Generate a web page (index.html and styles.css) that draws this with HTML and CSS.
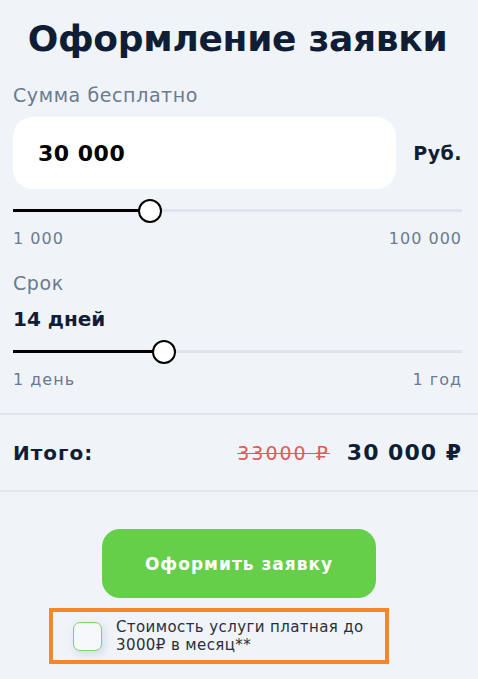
FILE: index.html
```html
<!DOCTYPE html>
<html lang="ru">
<head>
  <meta charset="UTF-8">
  <title>Оформление заявки</title>
  <meta name="viewport" content="width=device-width, initial-scale=1.0">
  <link rel="stylesheet" href="styles.css">
</head>
<body>

<div class="container">
  <h1>Оформление заявки</h1>

  <!-- Сумма -->
  <div class="field">
    <div class="label">Сумма бесплатно</div>
    <div class="amount-row">
      <div class="amount-box">30 000</div>
      <div class="currency">Руб.</div>
    </div>
    <div class="slider">
      <div class="slider-fill" style="width: 137px"></div>
      <span class="slider-thumb" style="left: 137px"></span>
    </div>
    <div class="range-labels">
      <span>1 000</span>
      <span>100 000</span>
    </div>
  </div>

  <!-- Срок -->
  <div class="field term">
    <div class="label">Срок</div>
    <div class="term-value">14 дней</div>
    <div class="slider">
      <div class="slider-fill" style="width: 151px"></div>
      <span class="slider-thumb" style="left: 151px"></span>
    </div>
    <div class="range-labels">
      <span>1 день</span>
      <span>1 год</span>
    </div>
  </div>
</div>

<div class="total">
  <div class="total-label">Итого:</div>
  <div class="total-prices">
    <span class="old-price">33000 ₽</span>
    <span class="new-price">30 000 ₽</span>
  </div>
</div>

<div class="actions">
  <button class="button">Оформить заявку</button>
  <label class="agree">
    <span class="checkbox"></span>
    <span class="agree-text">Стоимость услуги платная до 3000₽ в месяц**</span>
  </label>
</div>

</body>
</html>
```

FILE: styles.css
```css
body {
  font-family: "DejaVu Sans", sans-serif;
  background-color: #f0f4f9;
  margin: 0;
  color: #0f1e35;
}

.container {
  padding: 0 16px 0 13px;
}

h1 {
  font-size: 36px;
  font-weight: 800;
  text-align: center;
  margin: 0;
  padding-top: 17px;
  line-height: 44px;
  letter-spacing: -0.3px;
}

.label {
  font-size: 19px;
  letter-spacing: 0.6px;
  color: #6b7a90;
  line-height: 22px;
}

.field {
  margin-top: 23px;
}

.amount-row {
  display: flex;
  align-items: center;
  justify-content: space-between;
  margin-top: 11px;
}

.amount-box {
  width: 383px;
  height: 72px;
  box-sizing: border-box;
  background: #ffffff;
  border-radius: 20px;
  padding-left: 25px;
  display: flex;
  align-items: center;
  font-size: 22px;
  font-weight: bold;
  letter-spacing: 0.5px;
  color: #000;
}

.currency {
  font-size: 19px;
  font-weight: bold;
  letter-spacing: 0.5px;
}

.slider {
  position: relative;
  height: 3px;
  background: #dde4ee;
  margin-top: 20px;
}

.slider-fill {
  height: 3px;
  background: #000;
}

.slider-thumb {
  position: absolute;
  top: 50%;
  width: 24px;
  height: 24px;
  box-sizing: border-box;
  border: 2px solid #000;
  border-radius: 50%;
  background: #fff;
  transform: translate(-50%, -50%);
}

.range-labels {
  display: flex;
  justify-content: space-between;
  margin-top: 17px;
  font-size: 16px;
  letter-spacing: 1px;
  color: #6b7a90;
}

.term {
  margin-top: 24px;
}

.term-value {
  font-size: 20px;
  font-weight: bold;
  margin-top: 13px;
}

.term .slider {
  margin-top: 19px;
}

.total {
  display: flex;
  justify-content: space-between;
  align-items: center;
  margin-top: 24px;
  padding: 0 16px 0 13px;
  height: 75px;
  border-top: 2px solid #dfe6ef;
  border-bottom: 2px solid #dfe6ef;
}

.total-label {
  font-size: 20px;
  font-weight: bold;
  letter-spacing: 1px;
}

.total-prices {
  display: flex;
  align-items: center;
  gap: 17px;
}

.old-price {
  font-size: 19px;
  letter-spacing: 2px;
  color: #e05a5a;
  text-decoration: line-through;
}

.new-price {
  font-size: 22px;
  font-weight: bold;
  letter-spacing: 1px;
}

.actions {
  display: flex;
  flex-direction: column;
  align-items: center;
  padding-top: 37px;
}

.button {
  width: 274px;
  height: 69px;
  background-color: #65cf4a;
  color: #fff;
  font-family: inherit;
  font-size: 17px;
  font-weight: bold;
  letter-spacing: 1px;
  border: none;
  border-radius: 18px;
  cursor: pointer;
}

.agree {
  align-self: flex-start;
  display: flex;
  align-items: center;
  gap: 14px;
  width: 340px;
  box-sizing: border-box;
  margin: 10px 0 0 49px;
  padding: 6px 20px;
  border: 4px solid #f5862a;
}

.checkbox {
  flex: none;
  width: 29px;
  height: 29px;
  box-sizing: border-box;
  border: 1px solid #7fd36a;
  border-radius: 7px;
  background: #f6f8fb;
  box-shadow: 2px 3px 8px rgba(120, 140, 170, 0.25);
}

.agree-text {
  font-size: 15px;
  letter-spacing: 0.4px;
  line-height: 18px;
  color: #2a2f3a;
}
```
